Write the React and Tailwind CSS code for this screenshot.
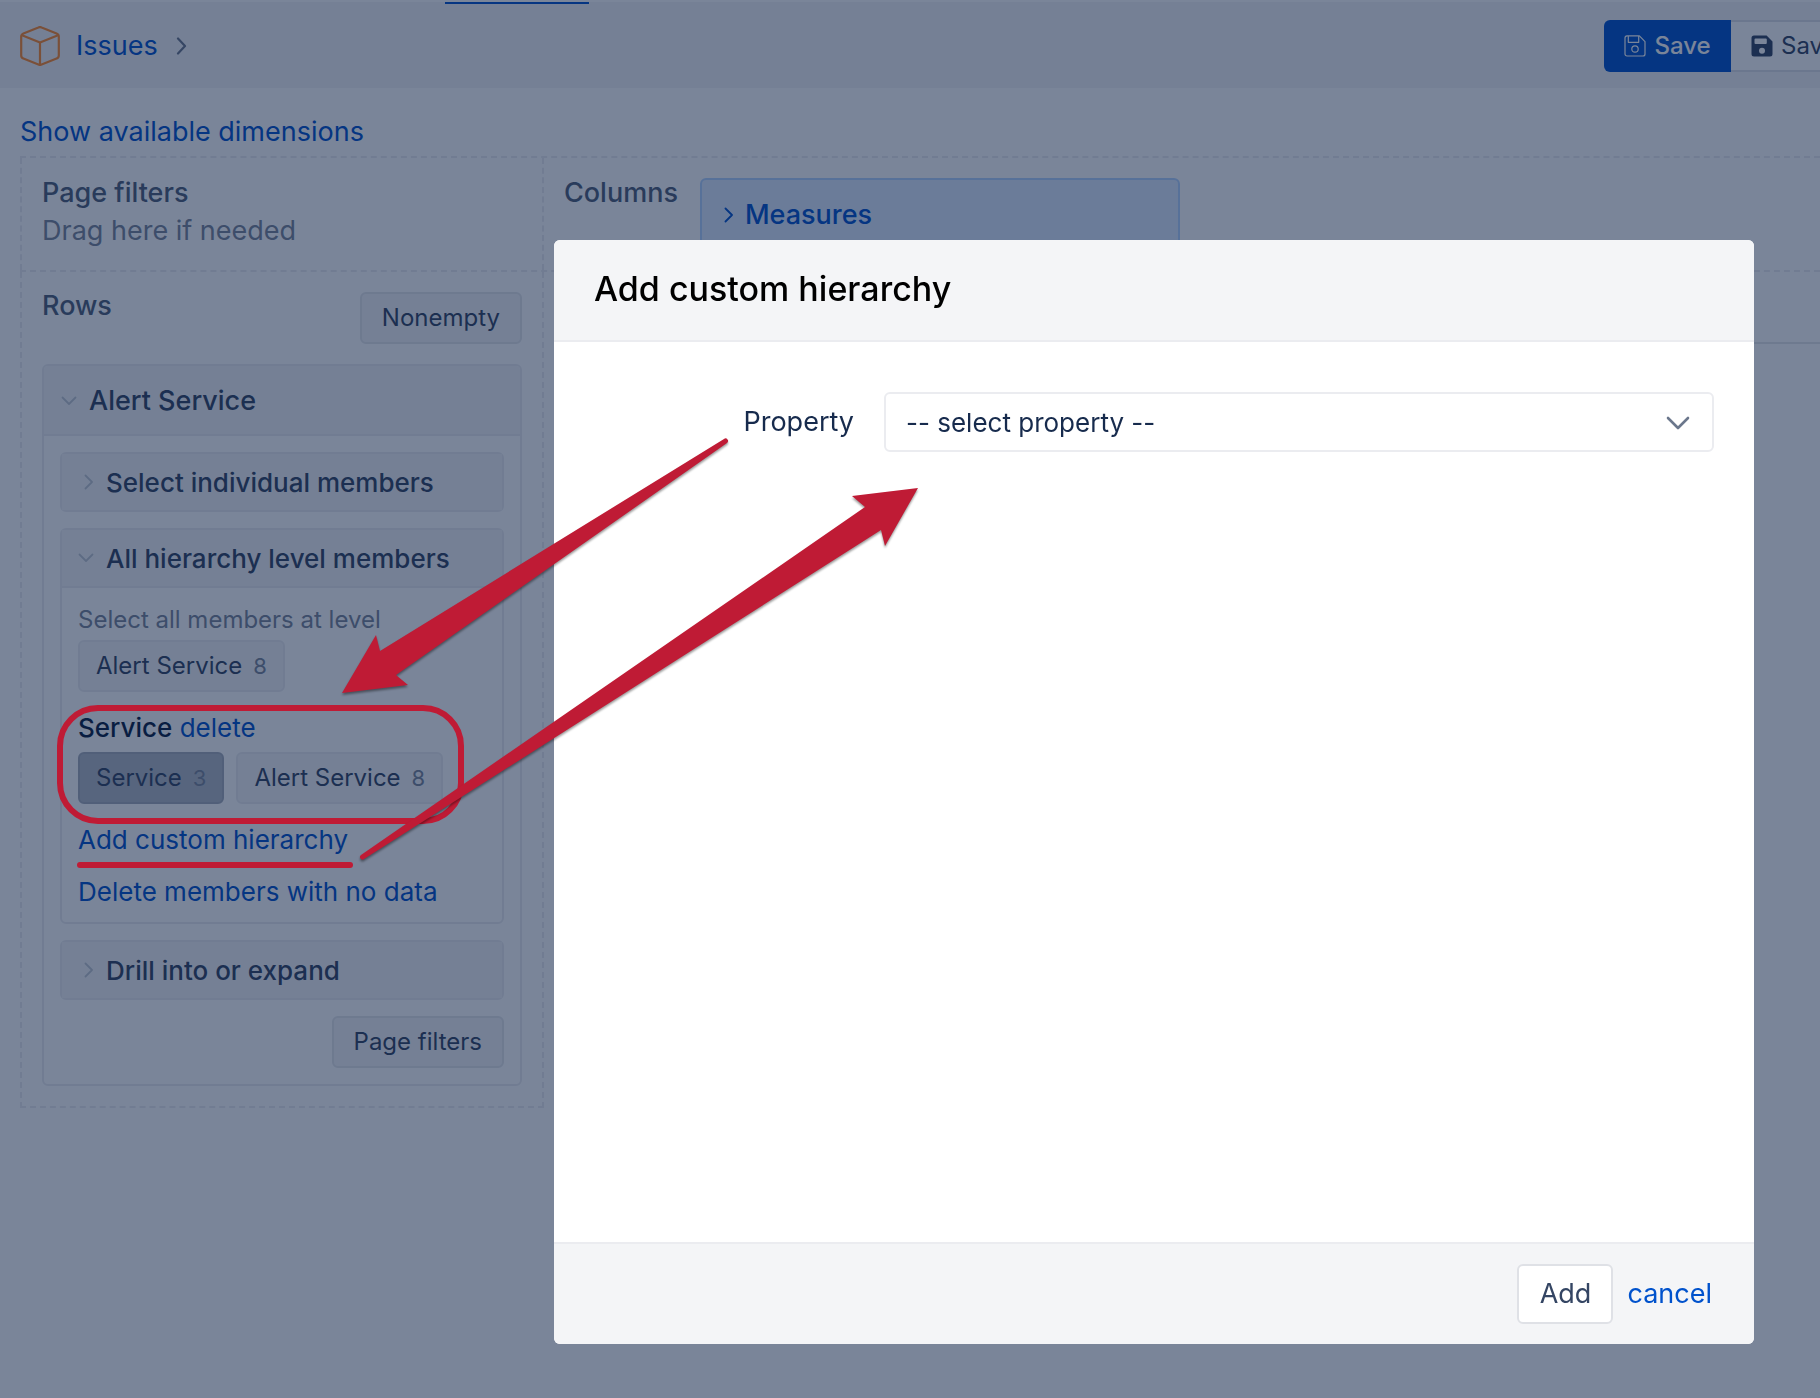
import { useState } from "react";

function ChevronRight({ className }) {
  return (
    <svg className={className} width="9" height="16" viewBox="0 0 9 16" fill="none" stroke="currentColor" strokeWidth="1.800" strokeLinecap="round" strokeLinejoin="round" aria-hidden="true">
      <path d="M1.500 1.500L8 8l-6.500 6.500" />
    </svg>
  );
}

function ChevronDown({ className }) {
  return (
    <svg className={className} width="16" height="10" viewBox="0 0 16 10" fill="none" stroke="currentColor" strokeWidth="1.800" strokeLinecap="round" strokeLinejoin="round" aria-hidden="true">
      <path d="M1.500 1.500L8 8l6.500-6.500" />
    </svg>
  );
}

function CubeIcon() {
  return (
    <svg width="40" height="40" viewBox="0 0 40 40" fill="none" stroke="#ff8b2e" strokeWidth="2.200" strokeLinejoin="round" aria-hidden="true">
      <path d="M18.400 1.400a4 4 0 0 1 3.200 0l15 6a3.500 3.500 0 0 1 2.200 3.200v18.800a3.500 3.500 0 0 1-2.200 3.200l-15 6a4 4 0 0 1-3.200 0l-15-6a3.500 3.500 0 0 1-2.200-3.200V10.600a3.500 3.500 0 0 1 2.200-3.200z" />
      <path d="M2 9.200l18 7.300 18-7.300M20 16.500v22" />
    </svg>
  );
}

function SaveIcon() {
  return (
    <svg width="22" height="22" viewBox="0 0 22 22" fill="none" stroke="currentColor" strokeWidth="1.200" strokeLinejoin="round" aria-hidden="true">
      <path d="M3 .8h12.400L21 6.600V19a2 2 0 0 1-2 2H3a2 2 0 0 1-2-2V3A2.200 2.200 0 0 1 3 .8z" />
      <path d="M4.300 1v6.300h10.400V1" />
      <circle cx="11" cy="14" r="3.200" />
    </svg>
  );
}

function SaveSolidIcon() {
  return (
    <svg width="22" height="22" viewBox="0 0 22 22" fill="currentColor" fillRule="evenodd" aria-hidden="true">
      <path d="M3 .5h12.600L21.500 6.500V19a2.500 2.500 0 0 1-2.500 2.500H3A2.500 2.500 0 0 1 .5 19V3A2.500 2.500 0 0 1 3 .5zM4.500 3.500a1 1 0 0 0-1 1V8a1 1 0 0 0 1 1h10.300a1 1 0 0 0 1-1V4.500a1 1 0 0 0-1-1zM11 12.700a3 3 0 1 0 0 6 3 3 0 0 0 0-6z" />
    </svg>
  );
}

function LevelButton({ name, count, selected }) {
  return (
    <button
      type="button"
      className={
        selected
          ? "flex h-[52px] items-center gap-[11px] rounded-md border-2 border-[#a5adba] bg-[#b3bac5] px-4 text-[24px] text-[#344563]"
          : "flex h-[52px] items-center gap-[11px] rounded-md border-2 border-[#ebecf0] bg-[#f4f5f7] px-4 text-[24px] text-[#344563]"
      }
    >
      {name}
      <span className="text-[22px] text-[#7a869a]">{count}</span>
    </button>
  );
}

function Section({ title, open, children }) {
  return (
    <section className="rounded-md border-2 border-[#ebecf0]">
      <h3 className={open ? "border-b-2 border-[#ebecf0] bg-[#f4f5f7]" : "bg-[#f4f5f7]"}>
        <button type="button" className="flex h-14 w-full items-center text-[26px] font-medium text-[#344563]">
          <span className="w-11 text-[#c1c7d0]">
            {open ? <ChevronDown className="ml-4" /> : <ChevronRight className="ml-[22px]" />}
          </span>
          {title}
        </button>
      </h3>
      {children}
    </section>
  );
}

function Toolbar() {
  return (
    <header className="mt-0.5 flex h-[86px] items-start justify-between bg-[#f4f5f7]">
      <nav className="flex flex-1 items-start">
        <div className="flex w-[445px] shrink-0 items-center pt-6 pl-5">
          <CubeIcon />
          <a href="#issues" className="ml-4 text-[27px] leading-10 text-[#0052cc]">
            Issues
          </a>
          <svg className="ml-[18px]" width="11" height="18" viewBox="0 0 11 18" fill="none" stroke="#6b778c" strokeWidth="2.200" strokeLinecap="round" strokeLinejoin="round" aria-hidden="true">
            <path d="M2 1.500l7 7.500-7 7.500" />
          </svg>
        </div>
        <div className="h-0.5 w-36 bg-[#0052cc]" />
      </nav>
      <div className="flex w-[216px] shrink-0 overflow-hidden pt-[18px] text-[24px]">
        <button type="button" className="flex h-[52px] w-[127px] shrink-0 items-center justify-center gap-2 rounded-l-md bg-[#0052cc] font-medium text-white">
          <SaveIcon />
          Save
        </button>
        <button type="button" className="flex h-[52px] shrink-0 items-center gap-2 border-y-2 border-[#dfe1e6] bg-white px-5 whitespace-nowrap text-[#344563]">
          <SaveSolidIcon />
          Save as
        </button>
      </div>
    </header>
  );
}

function RowsPanel() {
  return (
    <div className="border-2 border-t-0 border-dashed border-[#ebecf0] p-5">
      <div className="mb-5 flex items-start justify-between">
        <h2 className="text-[27px] leading-7 font-medium text-[#505f79]">Rows</h2>
        <button type="button" className="h-[52px] rounded-md border-2 border-[#e4e6ea] bg-[#f4f5f7] px-5 text-[24px] text-[#344563]">
          Nonempty
        </button>
      </div>

      <div className="overflow-hidden rounded-md border-2 border-[#ebecf0]">
        <h2 className="border-b-2 border-[#ebecf0] bg-[#f4f5f7]">
          <button type="button" className="flex h-[68px] w-full items-center pt-0.5 text-[27px] font-medium text-[#344563]">
            <ChevronDown className="mr-3 ml-[17px] text-[#c1c7d0]" />
            Alert Service
          </button>
        </h2>

        <div className="flex flex-col gap-4 p-4">
          <Section title="Select individual members" />

          <Section title="All hierarchy level members" open>
            <div className="px-4 pt-5 pb-[14px] text-[26px]">
              <p className="text-[24px] leading-6 text-[#7a869a]">Select all members at level</p>
              <div className="mt-2 flex">
                <LevelButton name="Alert Service" count="8" />
              </div>
              <p className="mt-5 leading-8">
                <span className="font-medium text-[#091e42]">Service</span>{" "}
                <a href="#delete" className="text-[#0052cc]">delete</a>
              </p>
              <div className="mt-2 flex gap-3">
                <LevelButton name="Service" count="3" selected />
                <LevelButton name="Alert Service" count="8" />
              </div>
              <p className="mt-5 leading-8">
                <a href="#add" className="text-[#0052cc]">Add custom hierarchy</a>
              </p>
              <p className="mt-5 leading-8">
                <a href="#clean" className="text-[#0052cc]">Delete members with no data</a>
              </p>
            </div>
          </Section>

          <Section title="Drill into or expand" />

          <button type="button" className="h-[52px] self-end rounded-md border-2 border-[#e4e6ea] bg-[#f4f5f7] px-5 text-[24px] text-[#344563]">
            Page filters
          </button>
        </div>
      </div>
    </div>
  );
}

function CustomHierarchyDialog() {
  const [property, setProperty] = useState("");

  return (
    <div className="fixed inset-0 flex items-start justify-end overflow-hidden bg-[#091e42]/54 pt-60 pr-[66px]">
      <form role="dialog" aria-labelledby="dialog-title" className="flex w-full max-w-[1200px] flex-col overflow-hidden rounded-md bg-white">
        <header className="border-b-2 border-[#ebecf0] bg-[#f4f5f7] px-10 pt-[29px] pb-[31px]">
          <h1 id="dialog-title" className="text-[34px] leading-10 font-medium text-black">
            Add custom hierarchy
          </h1>
        </header>

        <div className="flex min-h-[900px] items-start px-10 pt-[50px]">
          <label htmlFor="property" className="w-[260px] text-right text-[27px] leading-[60px] text-[#172b4d]">
            Property
          </label>
          <div className="relative ml-[30px] flex-1">
            <select
              id="property"
              value={property}
              onChange={(e) => setProperty(e.target.value)}
              className="h-[60px] w-full appearance-none rounded-md border-2 border-[#ebecf0] bg-white px-5 text-[26px] text-[#172b4d]"
            >
              <option value="">-- select property --</option>
            </select>
            <svg className="pointer-events-none absolute top-6 right-6" width="24" height="14" viewBox="0 0 24 14" fill="none" stroke="#6b778c" strokeWidth="2.600" strokeLinecap="round" strokeLinejoin="round" aria-hidden="true">
              <path d="M2 2l10 10L22 2" />
            </svg>
          </div>
        </div>

        <footer className="flex items-center justify-end gap-[14px] border-t-2 border-[#ebecf0] bg-[#f4f5f7] py-5 pr-[42px] text-[27px]">
          <button type="button" className="h-[60px] w-24 rounded-md border-2 border-[#dfe1e6] bg-white text-[#344563]">
            Add
          </button>
          <a href="#cancel" className="text-[#0052cc]">cancel</a>
        </footer>
      </form>
    </div>
  );
}

// red marks drawn over the page and the dialog
function Annotations() {
  return (
    <svg className="pointer-events-none absolute top-0 left-0" width="1000" height="900" viewBox="0 0 1000 900" aria-hidden="true">
      <rect x="60" y="708" width="401" height="113" rx="38" fill="none" stroke="#bf1b35" strokeWidth="6" />
      <rect x="77" y="862" width="276" height="6" rx="3" fill="#bf1b35" />
      <g fill="#bf1b35" className="drop-shadow-[0_2px_1px_rgba(0,0,0,0.4)]">
        <path d="M342 693L376 635L380 651L724 439A2.500 2.500 0 0 1 727 443L396 675L408 685z" />
        <path d="M918 488L852 496L865 507L361 855A2.500 2.500 0 0 0 364 859L881 530L885 546z" />
      </g>
    </svg>
  );
}

export default function App() {
  return (
    <div className="relative min-h-screen overflow-hidden bg-white font-['Inter','Liberation_Sans',sans-serif]">
      <div className="flow-root">
        <Toolbar />

        <main className="pt-6 pl-5">
          <a href="#dimensions" className="block text-[27px] leading-10 text-[#0052cc]">
            Show available dimensions
          </a>

          <div className="mt-1 flex border-y-2 border-dashed border-[#ebecf0]">
            <div className="h-28 w-[524px] shrink-0 border-x-2 border-dashed border-[#ebecf0] px-5 pt-4">
              <h2 className="text-[27px] leading-[38px] font-medium text-[#505f79]">Page filters</h2>
              <p className="text-[27px] leading-[38px] text-[#7a869a]">Drag here if needed</p>
            </div>
            <div className="flex h-28 flex-1 items-start pl-5">
              <h2 className="pt-4 text-[27px] leading-[38px] font-medium text-[#505f79]">Columns</h2>
              <button type="button" className="mt-5 ml-[22px] flex h-[74px] w-[480px] items-center rounded-md border-2 border-[#b3d4ff] bg-[#deebff] pl-[22px] text-[27px] font-medium text-[#0052cc]">
                <ChevronRight className="mr-3" />
                Measures
              </button>
            </div>
          </div>

          <div className="flex items-start">
            <div className="w-[524px] shrink-0">
              <RowsPanel />
            </div>
            <div className="ml-5 h-[72px] flex-1 border-b-2 border-[#e4e6ea]" />
          </div>
        </main>
      </div>

      <CustomHierarchyDialog />
      <Annotations />
    </div>
  );
}
